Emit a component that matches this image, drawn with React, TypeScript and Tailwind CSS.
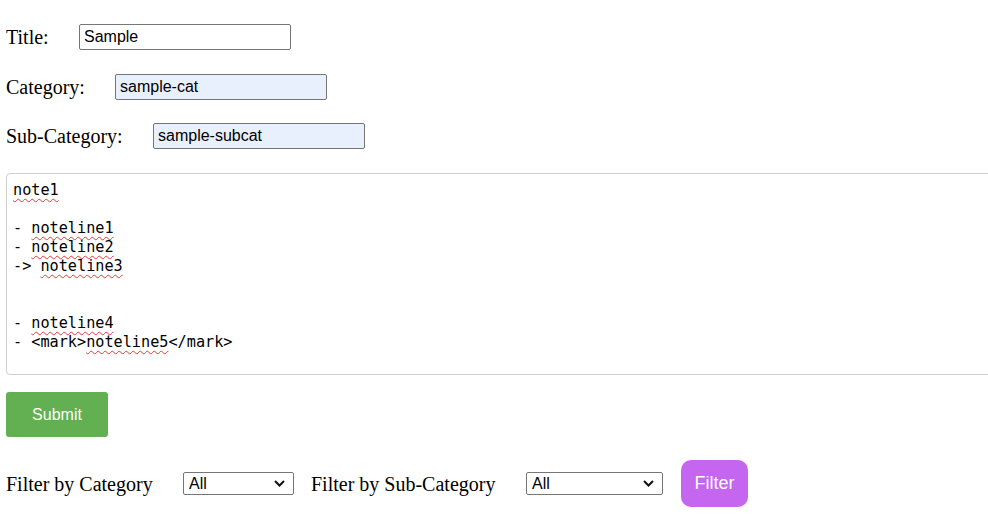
import React from "react";

const serif = { fontFamily: '"Liberation Serif", "Times New Roman", serif' };
const sans = { fontFamily: '"Liberation Sans", Arial, sans-serif' };
const mono = { fontFamily: '"DejaVu Sans Mono", Consolas, monospace' };

function Typo({ children }: { children: React.ReactNode }) {
  return (
    <span className="underline decoration-wavy decoration-[#e23b3b] decoration-1 underline-offset-[3px]">
      {children}
    </span>
  );
}

function Field({ label, value, filled, labelW }: { label: string; value: string; filled?: boolean; labelW: string }) {
  return (
    <div className="flex items-center h-[26px]">
      <span className={`${labelW} shrink-0 text-[20px] text-black`} style={serif}>
        {label}
      </span>
      <input
        readOnly
        value={value}
        className={`w-[212px] h-[26px] border border-[#767676] rounded-[2px] px-[4px] text-[16px] text-black outline-none ${
          filled ? "bg-[#e8f0fe]" : "bg-white"
        }`}
        style={sans}
      />
    </div>
  );
}

function Select({ width }: { width: string }) {
  return (
    <div
      className={`${width} h-[23px] border border-[#767676] rounded-[2px] flex items-center justify-between pl-[5px] pr-[8px] bg-white`}
      style={sans}
    >
      <span className="text-[16px] text-black leading-none">All</span>
      <svg width="11" height="7" viewBox="0 0 11 7" fill="none">
        <path d="M1 1 L5.5 5.5 L10 1" stroke="#111" strokeWidth="2" />
      </svg>
    </div>
  );
}

export default function App() {
  return (
    <div className="w-[988px] h-[526px] overflow-hidden bg-white pl-[6px]">
      <div className="pt-[24px]">
        <Field label="Title:" value="Sample" labelW="w-[73px]" />
      </div>
      <div className="mt-[24px]">
        <Field label="Category:" value="sample-cat" filled labelW="w-[109px]" />
      </div>
      <div className="mt-[23px]">
        <Field label="Sub-Category:" value="sample-subcat" filled labelW="w-[147px]" />
      </div>

      {/* Notes textarea */}
      <div
        className="mt-[24px] w-[1000px] h-[202px] border border-[#cfcfcf] rounded-[4px] pl-[6px] pt-[7px] text-[15.2px] leading-[19px] text-black whitespace-pre"
        style={mono}
      >
        <div><Typo>note1</Typo></div>
        <div>{" "}</div>
        <div>- <Typo>noteline1</Typo></div>
        <div>- <Typo>noteline2</Typo></div>
        <div>-&gt; <Typo>noteline3</Typo></div>
        <div>{" "}</div>
        <div>{" "}</div>
        <div>- <Typo>noteline4</Typo></div>
        <div>- &lt;mark&gt;<Typo>noteline5</Typo>&lt;/mark&gt;</div>
      </div>

      <button
        className="mt-[17px] w-[102px] h-[45px] rounded-[3px] bg-[#62b052] text-white text-[16px]"
        style={sans}
      >
        Submit
      </button>

      <div className="mt-[23px] flex items-center h-[47px]">
        <span className="w-[177px] shrink-0 text-[20px] text-black" style={serif}>
          Filter by Category
        </span>
        <Select width="w-[111px]" />
        <span className="w-[232px] shrink-0 pl-[17px] text-[20px] text-black" style={serif}>
          Filter by Sub-Category
        </span>
        <Select width="w-[137px]" />
        <button
          className="ml-[18px] w-[67px] h-[47px] rounded-[10px] bg-[#c466f0] text-white text-[18px]"
          style={sans}
        >
          Filter
        </button>
      </div>
    </div>
  );
}
